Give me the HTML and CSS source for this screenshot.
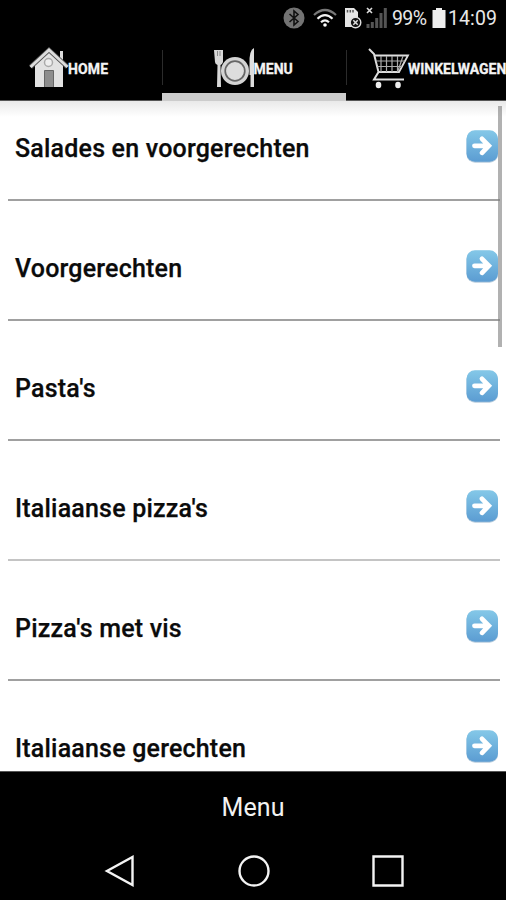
FILE: index.html
```html
<!DOCTYPE html>
<html lang="nl">
<head>
<meta charset="utf-8">
<title>Menu</title>
<link rel="stylesheet" href="styles.css">
</head>
<body>
<svg class="defs" width="0" height="0" aria-hidden="true">
  <defs>
    <linearGradient id="blue" x1="0" y1="0" x2="0" y2="1">
      <stop offset="0" stop-color="#84c8e8"/><stop offset="1" stop-color="#5b9cd2"/>
    </linearGradient>
    <symbol id="go" viewBox="0 0 32 33">
      <rect x=".5" y=".8" width="31.500" height="32" rx="8.500" fill="#4b80ab" opacity=".4"/>
      <rect x=".5" y=".3" width="31.500" height="31.500" rx="8.500" fill="url(#blue)"/>
      <path d="M8.500 15.800H22M16 8.800L22.800 15.800L16 22.800" fill="none" stroke="#fff" stroke-width="4.800" stroke-linecap="round"/>
    </symbol>
  </defs>
</svg>
<div class="phone">
  <div class="status">
    <svg class="i-bt" width="22" height="22" viewBox="0 0 22 22"><circle cx="11" cy="11" r="10.500" fill="#737373"/><path d="M6.500 7L15 14.500L11 18V4L15 7.500L6.500 15" fill="none" stroke="#111" stroke-width="1.600"/></svg>
    <svg class="i-wifi" width="24" height="20" viewBox="0 0 24 20"><g fill="none" stroke-width="2.200"><path d="M1 7Q12-3 23 7" stroke="#777"/><path d="M4.500 10.700Q12 3.500 19.500 10.700M8 14.200Q12 10.500 16 14.200" stroke="#f2f2f2"/></g><circle cx="12" cy="17" r="1.800" fill="#fff"/></svg>
    <svg class="i-sim" width="18" height="22" viewBox="0 0 18 22"><path d="M1 1H10L14 5V20H1Z" fill="#e5e5e5"/><path d="M3.500 3V5.500M6.300 3V5.500M9 3V5.500" stroke="#555" stroke-width="1.500"/><circle cx="11.500" cy="15.500" r="5.300" fill="#111" stroke="#ddd" stroke-width="1.400"/><path d="M9.300 13.300L13.700 17.700M13.700 13.300L9.300 17.700" stroke="#ddd" stroke-width="1.500"/></svg>
    <svg class="i-sig" width="22" height="22" viewBox="0 0 22 22"><path d="M1 1L6 6M6 1L1 6" stroke="#ddd" stroke-width="1.600"/><path d="M2 17V21M6.300 15V21M10.700 11V21M15 6V21M19.300 1V21" stroke="#555" stroke-width="3"/></svg>
    <span class="pct">99%</span>
    <svg class="i-bat" width="14" height="22" viewBox="0 0 14 22"><path d="M4 1H10V3H13.500V21H.5V3H4Z" fill="#eee"/></svg>
    <span class="clock">14:09</span>
  </div>
  <nav class="tabs">
    <div class="tab home">
      <svg width="40" height="42" viewBox="0 0 40 42"><path d="M31 4H34V14L31 11Z" fill="#ddd"/><path d="M6 18L20 5L34 18V40H6Z" fill="#e2e2e2"/><path d="M1.500 20L20 3L38.500 20" fill="none" stroke="#555" stroke-width="4.500"/><path d="M1.500 20L20 3L38.500 20" fill="none" stroke="#ddd" stroke-width="2.800"/><circle cx="19.500" cy="15.500" r="4" fill="#eee" stroke="#aaa" stroke-width="1.500"/><path d="M15.500 40V23.500H24.500V40" fill="#8d8d8d" stroke="#666"/></svg>
      <span>HOME</span>
    </div>
    <div class="tab menu">
      <svg width="41" height="42" viewBox="0 0 41 42"><path d="M0 3H9V15Q8 18 6.500 18L7 40H3L3.500 18Q1 17 1 15Z" fill="#d8d8d8"/><path d="M3.500 4V9M6 4V9" stroke="#777" stroke-width=".8"/><path d="M40 1V40H36.500V28H35.500V17Q35 3 40 1Z" fill="#ddd"/><circle cx="21" cy="24" r="14" fill="#d3d3d3"/><circle cx="21" cy="24" r="9.800" fill="#ddd" stroke="#666" stroke-width="1.700"/></svg>
      <span>MENU</span>
    </div>
    <div class="tab cart">
      <svg width="42" height="42" viewBox="0 0 42 42"><g fill="none" stroke="#ddd"><path d="M1 2L6 7L10.500 25L6 32.500H36" stroke-width="2"/><path d="M7 8.500H40L31 25H10.500" stroke-width="1.800"/><path d="M8 14H37M9.500 19.500H34M13 9V25M18.500 9V25M24 9V25M29.500 9V25M35 9L30 24" stroke="#aaa" stroke-width="1.200"/></g><ellipse cx="10.500" cy="38" rx="2.800" ry="3.200" fill="#eee"/><ellipse cx="30" cy="38" rx="2.800" ry="3.200" fill="#eee"/></svg>
      <span>WINKELWAGEN</span>
    </div>
  </nav>
  <main class="list">
    <div class="row"><span>Salades en voorgerechten</span><svg width="32" height="33"><use href="#go"/></svg></div>
    <div class="row"><span>Voorgerechten</span><svg width="32" height="33"><use href="#go"/></svg></div>
    <div class="row"><span>Pasta's</span><svg width="32" height="33"><use href="#go"/></svg></div>
    <div class="row"><span>Italiaanse pizza's</span><svg width="32" height="33"><use href="#go"/></svg></div>
    <div class="row"><span>Pizza's met vis</span><svg width="32" height="33"><use href="#go"/></svg></div>
    <div class="row"><span>Italiaanse gerechten</span><svg width="32" height="33"><use href="#go"/></svg></div>
    <div class="scrollbar"></div>
  </main>
  <footer class="title">Menu</footer>
  <div class="keys">
    <svg width="32" height="32" viewBox="0 0 32 32"><path d="M28.500 2V30L3 16Z"/></svg>
    <svg width="32" height="32" viewBox="0 0 32 32"><circle cx="16" cy="16" r="14.500"/></svg>
    <svg width="32" height="32" viewBox="0 0 32 32"><path d="M1.500 1.500H30.500V30.500H1.500Z"/></svg>
  </div>
</div>
</body>
</html>
```
FILE: styles.css
```css
* { box-sizing: border-box; }
body { margin: 0; font-family: Roboto, "Liberation Sans", sans-serif; background: #000; }
svg { display: block; flex: none; }
.defs { position: absolute; }
.phone { width: 506px; height: 900px; display: flex; flex-direction: column; overflow: hidden; background: #000; }

.status { height: 36px; flex: none; display: flex; align-items: center; padding-left: 283px; color: #e8e8e8; font-size: 19.5px; line-height: 37px; white-space: nowrap; }
.i-wifi { margin-left: 8px; }
.i-sim { margin-left: 7px; }
.i-sig { margin-left: 4px; }
.pct { margin-left: 4px; width: 35px; letter-spacing: -0.6px; }
.i-bat { margin-left: 5px; }
.clock { margin-left: 2px; letter-spacing: 0.1px; }

.tabs { height: 65px; flex: none; display: flex; border-bottom: 1px solid #555; }
.tab { height: 65px; display: flex; align-items: flex-start; padding-top: 11px; color: #f4f4f4; font-size: 14px; font-weight: 700; line-height: 44px; white-space: nowrap; flex: none; overflow: hidden; -webkit-text-stroke: 0.3px #f4f4f4; }
.tab svg { margin-right: -1px; }
.home { width: 162px; padding-left: 29px; letter-spacing: 0.15px; }
.menu { width: 184px; padding-left: 51.5px; border-bottom: 8px solid #ccc; }
.cart { width: 160px; padding-left: 22px; }
.cart svg { margin-right: -2px; }
.menu, .cart { background: linear-gradient(#2b2b2b, #2b2b2b) 0 14px / 1px 35px no-repeat; }

.list { height: 670px; flex: none; position: relative; overflow: hidden; padding: 0 6px 0 8px; background: linear-gradient(#e9e9e9, #fff 16px); }
.row { height: 120px; display: flex; justify-content: space-between; align-items: flex-end; padding: 0 2px 36px 7px; border-bottom: 2px solid #a0a0a0; color: #0b0b0b; font-size: 25px; font-weight: 500; line-height: 32px; letter-spacing: 0.2px; white-space: nowrap; -webkit-text-stroke: 0.25px #0b0b0b; }
.row span { margin-bottom: -2px; }
.row:first-child { height: 100px; }
.row:nth-child(4) { border-color: #c4c4c4; }
.scrollbar { position: absolute; left: 498px; top: 5px; width: 4px; height: 241px; background: rgba(125, 125, 125, .6); }

.title { height: 72px; flex: none; border-top: 1px solid #555; color: #f2f2f2; font-size: 25px; line-height: 71px; text-align: center; letter-spacing: 0.1px; }
.keys { height: 57px; display: flex; justify-content: space-between; padding: 12px 102px 0 104px; }
.keys svg { fill: none; stroke: #f4f4f4; stroke-width: 2.4; }
```
